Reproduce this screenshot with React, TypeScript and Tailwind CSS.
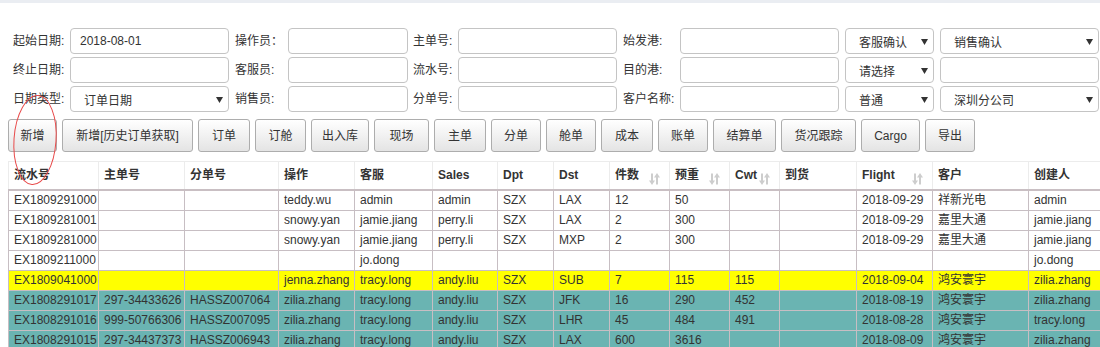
import React from "react";

const Label = ({ text, w, ml }: { text: string; w: string; ml: string }) => (
  <span className={`${w} ${ml} shrink-0 text-[12px] text-[#333]`}>{text}</span>
);

const Input = ({ w, value }: { w: string; value?: string }) => (
  <div className={`${w} h-[26px] shrink-0 border border-[#c4c4c4] rounded-[4px] px-[9px] flex items-center text-[12px] text-[#333]`}>
    {value}
  </div>
);

const Caret = () => (
  <svg width="7" height="6" viewBox="0 0 7 6" className="absolute right-[5px] top-[10px]">
    <polygon points="0,0 7,0 3.5,6" fill="#333" />
  </svg>
);

const Select = ({ w, ml, value }: { w: string; ml?: string; value?: string }) => (
  <div className={`${w} ${ml ?? ""} relative h-[26px] shrink-0 border border-[#c4c4c4] rounded-[4px] pl-[13px] pt-[3px] flex items-center text-[12px] text-[#333]`}>
    {value}
    {value !== undefined && <Caret />}
  </div>
);

const SortIcon = () => (
  <svg width="11" height="12" viewBox="0 0 11 12" className="absolute right-[9px] top-[11px]">
    <line x1="3" y1="0.5" x2="3" y2="9" stroke="#cdcdcd" strokeWidth="2" />
    <polygon points="0,7.5 6,7.5 3,12" fill="#cdcdcd" />
    <polygon points="5,4.5 11,4.5 8,0" fill="#cdcdcd" />
    <line x1="8" y1="3" x2="8" y2="11.5" stroke="#cdcdcd" strokeWidth="2" />
  </svg>
);

const buttons: [string, string][] = [
  ["新增", "w-[49px]"],
  ["新增[历史订单获取]", "w-[131px]"],
  ["订单", "w-[52px]"],
  ["订舱", "w-[51px]"],
  ["出入库", "w-[58px]"],
  ["现场", "w-[55px]"],
  ["主单", "w-[52px]"],
  ["分单", "w-[50px]"],
  ["舱单", "w-[50px]"],
  ["成本", "w-[52px]"],
  ["账单", "w-[50px]"],
  ["结算单", "w-[63px]"],
  ["货况跟踪", "w-[75px]"],
  ["Cargo", "w-[59px]"],
  ["导出", "w-[50px]"],
];

const columns: { name: string; w: string; sort?: boolean }[] = [
  { name: "流水号", w: "w-[90px]" },
  { name: "主单号", w: "w-[86px]" },
  { name: "分单号", w: "w-[94px]" },
  { name: "操作", w: "w-[76px]" },
  { name: "客服", w: "w-[78px]" },
  { name: "Sales", w: "w-[65px]" },
  { name: "Dpt", w: "w-[56px]" },
  { name: "Dst", w: "w-[56px]" },
  { name: "件数", w: "w-[60px]", sort: true },
  { name: "预重", w: "w-[60px]", sort: true },
  { name: "Cwt", w: "w-[50px]", sort: true },
  { name: "到货", w: "w-[77px]" },
  { name: "Flight", w: "w-[76px]", sort: true },
  { name: "客户", w: "w-[96px]" },
  { name: "创建人", w: "w-[82px]" },
];

type Row = { bg: string; cells: string[] };

const rows: Row[] = [
  { bg: "bg-white", cells: ["EX1809291000", "", "", "teddy.wu", "admin", "admin", "SZX", "LAX", "12", "50", "", "", "2018-09-29", "祥新光电", "admin"] },
  { bg: "bg-white", cells: ["EX1809281001", "", "", "snowy.yan", "jamie.jiang", "perry.li", "SZX", "LAX", "2", "300", "", "", "2018-09-29", "嘉里大通", "jamie.jiang"] },
  { bg: "bg-white", cells: ["EX1809281000", "", "", "snowy.yan", "jamie.jiang", "perry.li", "SZX", "MXP", "2", "300", "", "", "2018-09-29", "嘉里大通", "jamie.jiang"] },
  { bg: "bg-white", cells: ["EX1809211000", "", "", "", "jo.dong", "", "", "", "", "", "", "", "", "", "jo.dong"] },
  { bg: "bg-[#ffff00]", cells: ["EX1809041000", "", "", "jenna.zhang", "tracy.long", "andy.liu", "SZX", "SUB", "7", "115", "115", "", "2018-09-04", "鸿安寰宇", "zilia.zhang"] },
  { bg: "bg-[#6ab4b2]", cells: ["EX1808291017", "297-34433626", "HASSZ007064", "zilia.zhang", "tracy.long", "andy.liu", "SZX", "JFK", "16", "290", "452", "", "2018-08-19", "鸿安寰宇", "zilia.zhang"] },
  { bg: "bg-[#6ab4b2]", cells: ["EX1808291016", "999-50766306", "HASSZ007095", "zilia.zhang", "tracy.long", "andy.liu", "SZX", "LHR", "45", "484", "491", "", "2018-08-28", "鸿安寰宇", "tracy.long"] },
  { bg: "bg-[#6ab4b2]", cells: ["EX1808291015", "297-34437373", "HASSZ006943", "zilia.zhang", "tracy.long", "andy.liu", "SZX", "LAX", "600", "3616", "", "", "2018-08-09", "鸿安寰宇", "zilia.zhang"] },
];

export default function App() {
  return (
    <div className="relative w-[1100px] h-[347px] overflow-hidden bg-white font-['Liberation_Sans','Noto_Sans_CJK_SC',sans-serif] text-[#333]">
      <div className="h-[3px] bg-[#eaedf2]" />

      {/* search form */}
      <div className="mt-[25px] flex flex-col gap-[3px]">
        <div className="flex items-center h-[26px]">
          <Label text="起始日期:" w="w-[57px]" ml="ml-[13px]" />
          <Input w="w-[159px]" value="2018-08-01" />
          <Label text="操作员：" w="w-[53px]" ml="ml-[6px]" />
          <Input w="w-[120px]" />
          <Label text="主单号:" w="w-[45px]" ml="ml-[5px]" />
          <Input w="w-[159px]" />
          <Label text="始发港:" w="w-[57px]" ml="ml-[6px]" />
          <Input w="w-[159px]" />
          <Select w="w-[89px]" ml="ml-[6px]" value="客服确认" />
          <Select w="w-[159px]" ml="ml-[6px]" value="销售确认" />
        </div>
        <div className="flex items-center h-[26px]">
          <Label text="终止日期:" w="w-[57px]" ml="ml-[13px]" />
          <Input w="w-[159px]" />
          <Label text="客服员:" w="w-[53px]" ml="ml-[6px]" />
          <Input w="w-[120px]" />
          <Label text="流水号:" w="w-[45px]" ml="ml-[5px]" />
          <Input w="w-[159px]" />
          <Label text="目的港:" w="w-[57px]" ml="ml-[6px]" />
          <Input w="w-[159px]" />
          <Select w="w-[89px]" ml="ml-[6px]" value="请选择" />
          <Select w="w-[159px]" ml="ml-[6px]" />
        </div>
        <div className="flex items-center h-[26px]">
          <Label text="日期类型:" w="w-[57px]" ml="ml-[13px]" />
          <Select w="w-[159px]" value="订单日期" />
          <Label text="销售员:" w="w-[53px]" ml="ml-[6px]" />
          <Input w="w-[120px]" />
          <Label text="分单号:" w="w-[45px]" ml="ml-[5px]" />
          <Input w="w-[159px]" />
          <Label text="客户名称:" w="w-[57px]" ml="ml-[6px]" />
          <Input w="w-[159px]" />
          <Select w="w-[89px]" ml="ml-[6px]" value="普通" />
          <Select w="w-[159px]" ml="ml-[6px]" value="深圳分公司" />
        </div>
      </div>

      {/* toolbar */}
      <div className="mt-[7px] ml-[8px] flex gap-[5px]">
        {buttons.map(([t, w]) => (
          <button
            key={t}
            className={`${w} h-[33px] shrink-0 border border-[#adadad] rounded-[3px] bg-gradient-to-b from-white to-[#e4e4e4] text-[12px] text-[#333] whitespace-nowrap`}
          >
            {t}
          </button>
        ))}
      </div>

      {/* grid */}
      <table className="mt-[9px] ml-[8px] table-fixed border-collapse w-[1102px] text-[12px]">
        <colgroup>
          {columns.map((c) => (
            <col key={c.name} className={c.w} />
          ))}
        </colgroup>
        <thead>
          <tr className="h-[28px]">
            {columns.map((c) => (
              <th
                key={c.name}
                className="relative border-t border-x border-[#ececec] border-b-2 border-b-[#c9bfc3] pl-[5px] text-left font-bold whitespace-nowrap"
              >
                {c.name}
                {c.sort && <SortIcon />}
              </th>
            ))}
          </tr>
        </thead>
        <tbody>
          {rows.map((r) => (
            <tr key={r.cells[0]} className={`h-[20px] ${r.bg}`}>
              {r.cells.map((v, i) => (
                <td key={i} className="border border-[#c7bec3] pl-[5px] pr-0 py-0 whitespace-nowrap overflow-visible leading-[19px]">
                  {v}
                </td>
              ))}
            </tr>
          ))}
        </tbody>
      </table>

      {/* hand-drawn annotation */}
      <svg className="absolute left-0 top-0 pointer-events-none" width="1100" height="347">
        <ellipse cx="35" cy="140" rx="21" ry="44.5" transform="rotate(4 35 140)" fill="none" stroke="#e84a4a" strokeWidth="1" />
      </svg>
    </div>
  );
}
